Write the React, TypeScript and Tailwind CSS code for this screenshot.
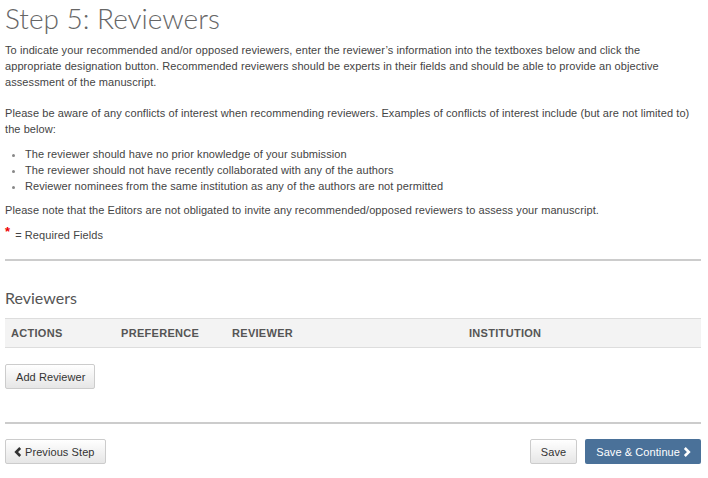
// Step 5 — Reviewers (manuscript submission wizard)

const COLUMNS = [
  { label: 'Actions', w: 'w-[110px]' },
  { label: 'Preference', w: 'w-[111px]' },
  { label: 'Reviewer', w: 'w-[237px]' },
  { label: 'Institution', w: 'flex-1' },
];

const CONFLICTS = [
  'The reviewer should have no prior knowledge of your submission',
  'The reviewer should not have recently collaborated with any of the authors',
  'Reviewer nominees from the same institution as any of the authors are not permitted',
];

function Chevron({ dir }: { dir: 'left' | 'right' }) {
  return (
    <svg width="8" height="10" viewBox="0 0 8 10" className="shrink-0">
      <path
        d={dir === 'left' ? 'M6.2 1 L2.2 5 L6.2 9' : 'M1.8 1 L5.8 5 L1.8 9'}
        fill="none"
        stroke="currentColor"
        strokeWidth="2.6"
        strokeLinejoin="miter"
      />
    </svg>
  );
}

const btnDefault =
  'h-[25px] border border-[#ccc] rounded-[2px] bg-gradient-to-b from-white to-[#e6e6e6] text-[11px] text-[#333] tracking-[0.08px]';

export default function App() {
  return (
    <div className="min-h-screen bg-white px-[5px] text-[11px] leading-4 text-[#444] font-['Liberation_Sans',Arial,sans-serif] w-[706px]">
      <h1 className="font-['Lato',sans-serif] font-light text-[28px] leading-[34px] text-[#666] pt-[1px]">
        Step 5: Reviewers
      </h1>

      <div className="pr-[4px] tracking-[0.08px]">
        <p className="mt-[7px]">
          To indicate your recommended and/or opposed reviewers, enter the reviewer’s information into the textboxes below and click the
          appropriate designation button. Recommended reviewers should be experts in their fields and should be able to provide an objective
          assessment of the manuscript.
        </p>

        <p className="mt-[15px]">
          Please be aware of any conflicts of interest when recommending reviewers. Examples of conflicts of interest include (but are not limited to)
          the below:
        </p>

        <ul className="mt-[9px] pl-[20px] list-disc marker:text-[#888]">
          {CONFLICTS.map((c) => (
            <li key={c}>{c}</li>
          ))}
        </ul>

        <p className="mt-2">
          Please note that the Editors are not obligated to invite any recommended/opposed reviewers to assess your manuscript.
        </p>

        <p className="mt-[8px] flex items-start">
          <span className="text-[#e00] text-[13px] leading-[12px] mr-[5px] font-bold">*</span>
          <span className="mt-[1px]">= Required Fields</span>
        </p>
      </div>

      <div className="mt-[16px] h-[2px] bg-[#ccc]" />

      <h2 className="mt-[27px] font-['Lato',sans-serif] text-[16px] leading-5 text-[#555]">Reviewers</h2>

      <div className="mt-[10px] flex h-[30px] items-center bg-[#f3f3f3] border-y border-[#ddd] pl-[6px]">
        {COLUMNS.map((c) => (
          <div key={c.label} className={`${c.w} font-bold uppercase text-[11px] text-[#555] tracking-[0.3px]`}>
            {c.label}
          </div>
        ))}
      </div>

      <button className={`${btnDefault} mt-[16px] pl-[10px] pr-[9px]`}>Add Reviewer</button>

      <div className="mt-[33px] h-[2px] bg-[#ccc]" />

      <div className="mt-[15px] flex items-center justify-between">
        <button className={`${btnDefault} pl-[8px] pr-[10px] flex items-center gap-[3px]`}>
          <Chevron dir="left" />
          Previous Step
        </button>
        <div className="flex items-center gap-[8px]">
          <button className={`${btnDefault} px-[10px]`}>Save</button>
          <button className="h-[25px] pl-[11px] pr-[10px] flex items-center gap-[3px] rounded-[2px] bg-[#4a7199] text-[11px] text-white tracking-[0.08px]">
            Save &amp; Continue
            <Chevron dir="right" />
          </button>
        </div>
      </div>
    </div>
  );
}
